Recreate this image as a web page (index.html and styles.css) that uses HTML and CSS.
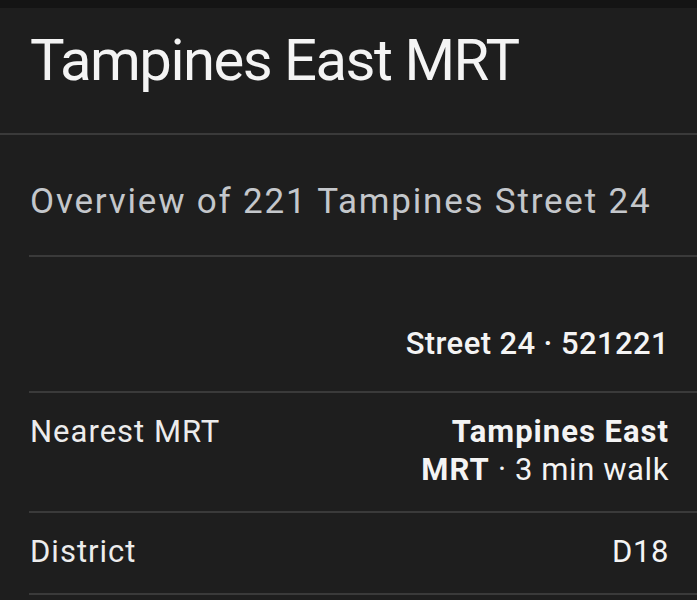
FILE: index.html
```html
<!DOCTYPE html>
<html lang="en">
<head>
<meta charset="utf-8">
<title>Tampines East MRT</title>
<link rel="stylesheet" href="styles.css">
</head>
<body>
<div class="topbar"></div>
<header class="header">
  <h1 class="title">Tampines East MRT</h1>
</header>
<main class="content">
  <h2 class="subtitle">Overview of 221 Tampines Street 24</h2>
  <div class="row row-address">
    <div class="label"></div>
    <div class="value">Street 24 · 521221</div>
  </div>
  <div class="row">
    <div class="label">Nearest MRT</div>
    <div class="value"><b>Tampines East<br>MRT</b> · 3 min walk</div>
  </div>
  <div class="row">
    <div class="label">District</div>
    <div class="value">D18</div>
  </div>
</main>
</body>
</html>
```
FILE: styles.css
```css
html, body {
  margin: 0;
  padding: 0;
  background: #1e1e1e;
  font-family: Roboto, "Noto Sans", sans-serif;
  color: #f1f1f1;
  overflow: hidden;
}
.topbar {
  height: 8px;
  background: #141414;
}
.header {
  height: 125px;
  border-bottom: 2px solid #3a3a3a;
  padding: 0 30px;
  display: flex;
  align-items: flex-start;
}
.title {
  margin: 0;
  padding-top: 19px;
  font-size: 58px;
  font-weight: 400;
  line-height: 66px;
  letter-spacing: -1.5px;
  color: #f4f4f4;
}
.content {
  padding-left: 29px;
}
.subtitle {
  margin: 0;
  padding: 47px 0 0 1px;
  height: 73px;
  font-size: 35px;
  font-weight: 400;
  line-height: 40px;
  letter-spacing: 1.8px;
  color: #c4c7cb;
  border-bottom: 2px solid #3a3a3a;
}
.row {
  display: flex;
  justify-content: space-between;
  align-items: flex-start;
  padding: 20px 28px 22px 1px;
  border-bottom: 2px solid #3a3a3a;
  font-size: 31px;
  line-height: 38px;
}
.row-address {
  align-items: flex-end;
  padding-top: 0;
  padding-bottom: 28px;
  height: 106px;
}
.label {
  color: #ececec;
  letter-spacing: 1px;
}
.value {
  text-align: right;
  color: #f4f4f4;
  letter-spacing: 0.6px;
}
.row-address .value {
  font-weight: 500;
  letter-spacing: 0.4px;
}
.value b {
  font-weight: 700;
  letter-spacing: 1px;
}
```
